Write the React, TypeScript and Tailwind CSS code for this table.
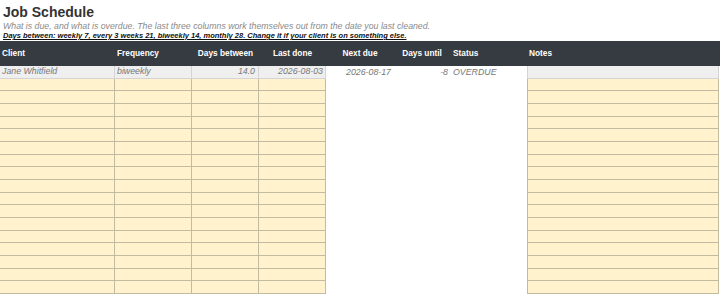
const cols = [
  { key: 'client', label: 'Client', w: 'w-[115px]', head: 'justify-start pl-[2px]', sheet: true },
  { key: 'freq', label: 'Frequency', w: 'w-[77px]', head: 'justify-start pl-[2px]', sheet: true },
  { key: 'between', label: 'Days between', w: 'w-[67px]', head: 'justify-center', sheet: true },
  { key: 'last', label: 'Last done', w: 'w-[67px]', head: 'justify-center', sheet: true },
  { key: 'next', label: 'Next due', w: 'w-[68px]', head: 'justify-center', sheet: false },
  { key: 'until', label: 'Days until', w: 'w-[56px]', head: 'justify-center', sheet: false },
  { key: 'status', label: 'Status', w: 'w-[77px]', head: 'justify-start pl-[3px]', sheet: false },
  { key: 'notes', label: 'Notes', w: 'w-[192px]', head: 'justify-start pl-[2px]', sheet: true },
];

const first: Record<string, { text: string; align: string }> = {
  client: { text: 'Jane Whitfield', align: 'justify-start pl-[2px]' },
  freq: { text: 'biweekly', align: 'justify-start pl-[2px]' },
  between: { text: '14.0', align: 'justify-end pr-[3px]' },
  last: { text: '2026-08-03', align: 'justify-end pr-[2px]' },
  next: { text: '2026-08-17', align: 'justify-end pr-[3px]' },
  until: { text: '-8', align: 'justify-end pr-[2px]' },
  status: { text: 'OVERDUE', align: 'justify-start pl-[3px]' },
  notes: { text: '', align: '' },
};

export default function App() {
  const blanks = Array.from({ length: 17 }, (_, i) => i);
  return (
    <div className="h-[294px] w-[720px] overflow-hidden bg-white font-['Liberation_Sans',Arial,sans-serif]">
      <div className="px-[3px] pt-[4px]">
        <h1 className="text-[14px] font-bold leading-[17px] text-[#333]">Job Schedule</h1>
        <p className="text-[8.75px] italic leading-[10px] text-[#8a8a8a]">
          What is due, and what is overdue. The last three columns work themselves out from the date you last cleaned.
        </p>
        <p className="text-[7.5px] font-bold italic leading-[10px] text-[#111] underline">
          Days between: weekly 7, every 3 weeks 21, biweekly 14, monthly 28. Change it if your client is on something else.
        </p>
      </div>

      <div className="flex h-[25px] w-[720px] bg-[#363b41]">
        {cols.map((c) => (
          <div key={c.key} className={`flex items-center ${c.w} ${c.head} text-[8.3px] font-bold text-white`}>
            {c.label}
          </div>
        ))}
      </div>

      <div className="flex h-[12.67px]">
        {cols.map((c) => (
          <div
            key={c.key}
            className={`flex items-center ${c.w} ${first[c.key].align} text-[8.8px] italic text-[#777] ${
              c.sheet ? 'border-r border-b border-[#d4d4d4] bg-[#efefef]' : 'bg-white'
            } ${c.key === 'notes' ? 'border-l' : ''}`}
          >
            {first[c.key].text}
          </div>
        ))}
      </div>

      {blanks.map((r) => (
        <div key={r} className="flex h-[12.67px]">
          {cols.map((c) => (
            <div
              key={c.key}
              className={`${c.w} ${
                c.sheet ? 'border-r border-b border-[#c2bba2] bg-[#fff2cc]' : 'bg-white'
              } ${c.key === 'notes' ? 'border-l' : ''}`}
            />
          ))}
        </div>
      ))}
    </div>
  );
}
